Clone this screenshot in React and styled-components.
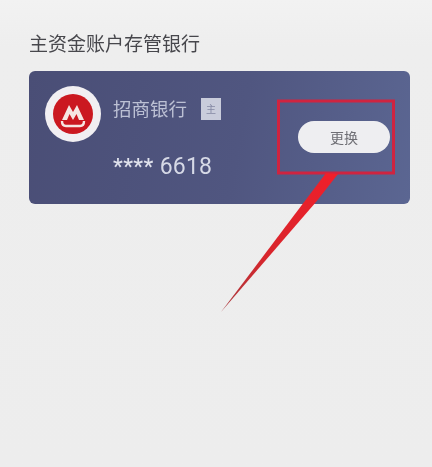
import React from "react";
import styled, { createGlobalStyle } from "styled-components";

const Global = createGlobalStyle`
  html, body { margin: 0; padding: 0; background: #ededed; }
  #root { width: 432px; height: 467px; overflow: hidden; }
`;

const Page = styled.div`
  position: relative;
  box-sizing: border-box;
  width: 432px;
  height: 467px;
  padding: 31px 22px 0 29px;
  background: linear-gradient(180deg, #f2f2f2 0%, #eeeeee 10%, #ededed 100%);
  font-family: "Noto Sans CJK SC", "Liberation Sans", sans-serif;
  filter: blur(0.7px);
`;

const Title = styled.h1`
  margin: 0 0 16px 0;
  height: 24px;
  font-size: 19px;
  line-height: 24px;
  font-weight: 400;
  color: #47474c;
`;

const Card = styled.section`
  box-sizing: border-box;
  width: 381px;
  height: 133px;
  display: flex;
  align-items: flex-start;
  padding: 15px 20px 0 16px;
  border-radius: 6px;
  background: linear-gradient(100deg, #4a4e76 0%, #505680 55%, #5b6692 100%);
`;

const Logo = styled.div`
  flex: none;
  width: 56px;
  height: 56px;
  border-radius: 50%;
  background: #f1eff2;
  display: flex;
  align-items: center;
  justify-content: center;
`;

const Info = styled.div`
  flex: 1;
  margin-left: 12px;
  display: flex;
  flex-direction: column;
`;

const NameRow = styled.div`
  display: flex;
  align-items: center;
  height: 46px;
  margin-top: -1px;
`;

const BankName = styled.span`
  font-size: 18.5px;
  color: #bcc0d4;
  line-height: 46px;
`;

const Badge = styled.span`
  width: 20px;
  height: 22px;
  margin: 1px 0 0 14px;
  background: #c9ccdb;
  color: #8488a4;
  font-size: 10px;
  line-height: 22px;
  text-align: center;
`;

const CardNumber = styled.div`
  display: flex;
  align-items: center;
  gap: 6px;
  margin-top: 18px;
  height: 34px;
  color: #d6d9e6;
  font-family: "Roboto", "Liberation Sans", sans-serif;
`;

const Stars = styled.span`
  font-size: 22px;
  font-weight: 500;
  letter-spacing: 0.4px;
  margin-top: 1px;
  color: #dfe1ec;
`;

const Digits = styled.span`
  font-size: 23px;
  letter-spacing: 0.2px;
`;

const ChangeButton = styled.button`
  flex: none;
  width: 92px;
  height: 32px;
  margin-top: 35px;
  padding: 0;
  border: 0;
  border-radius: 16px;
  background: #eeeef1;
  color: #6e6e74;
  font: 400 14px "Noto Sans CJK SC", sans-serif;
`;

const Annotation = styled.svg`
  position: absolute;
  left: 0;
  top: 0;
  width: 432px;
  height: 467px;
  pointer-events: none;
`;

export default function App() {
  return (
    <>
      <Global />
      <Page>
        <Title>主资金账户存管银行</Title>
        <Card>
          <Logo>
            <svg width="40" height="40" viewBox="0 0 40 40">
              <circle cx="20" cy="20" r="20" fill="#cb1820" />
              <path
                d="M9 26 L16 11 L20 18 L24 11 L31 26 L26 26 L23.5 20 L20 26 L16.5 20 L14 26 Z"
                fill="#f6e6e2"
              />
              <path
                d="M9 27 Q9 32 13 32 L27 32 Q31 32 31 27"
                fill="none"
                stroke="#f6e6e2"
                strokeWidth="2.4"
              />
            </svg>
          </Logo>
          <Info>
            <NameRow>
              <BankName>招商银行</BankName>
              <Badge>主</Badge>
            </NameRow>
            <CardNumber>
              <Stars>****</Stars>
              <Digits>6618</Digits>
            </CardNumber>
          </Info>
          <ChangeButton>更换</ChangeButton>
        </Card>
        <Annotation viewBox="0 0 432 467">
          <defs>
            <linearGradient id="arrowFill" x1="221" y1="312" x2="335" y2="172" gradientUnits="userSpaceOnUse">
              <stop offset="0" stopColor="#a83a3e" />
              <stop offset="0.4" stopColor="#d8252c" />
              <stop offset="1" stopColor="#f01f2a" />
            </linearGradient>
          </defs>
          <rect x="278.5" y="101" width="115" height="72" fill="none" stroke="#cf2440" strokeWidth="3" />
          <path d="M221 312 L326 173 L338 174 L316 202 Z" fill="url(#arrowFill)" />
        </Annotation>
      </Page>
    </>
  );
}
